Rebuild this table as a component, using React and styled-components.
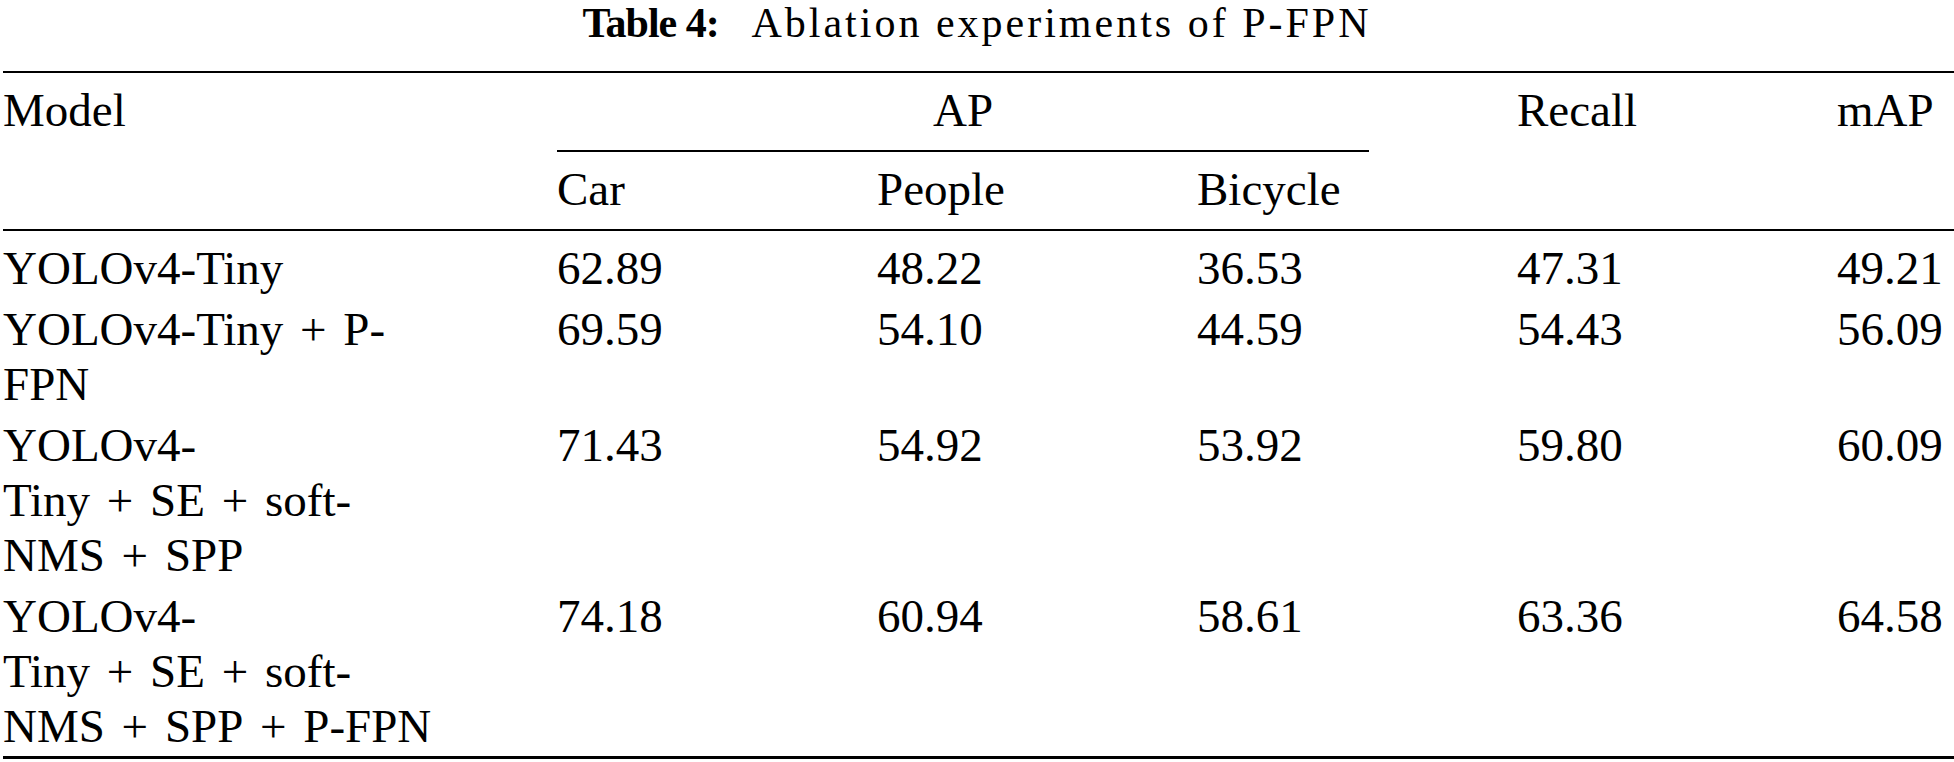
import React from "react";
import styled, { createGlobalStyle } from "styled-components";

const serif = `"Liberation Serif", Tinos, "Times New Roman", serif`;

const GlobalStyle = createGlobalStyle`
  html, body {
    margin: 0;
    padding: 0;
    background: #fff;
  }
  body {
    font-family: ${serif};
    color: #000;
  }
`;

const Page = styled.div`
  width: 1954px;
  overflow: hidden;
`;

const Caption = styled.div`
  font-family: ${serif};
  font-size: 42px;
  line-height: 46px;
  letter-spacing: 3px;
  text-align: center;
  margin-bottom: 25px;
  white-space: pre;
`;

const Label = styled.span`
  font-weight: bold;
  letter-spacing: -1px;
  margin-right: 8px;
`;

const Table = styled.table`
  font-family: ${serif};
  border-collapse: collapse;
  table-layout: fixed;
  width: 1951px;
  margin-left: 3px;
  font-size: 47px;
  line-height: 55px;
  color: #000;
  border-top: 2px solid #000;
  border-bottom: 3px solid #000;
`;

const Head = styled.thead`
  border-bottom: 2px solid #000;
`;

const Th = styled.th`
  font-weight: normal;
  text-align: left;
  vertical-align: top;
  padding: ${(p) => (p.$sub ? "10px 0 12px" : "10px 0 0")};
  padding-right: ${(p) => (p.$first ? "110px" : "0")};
`;

const Span = styled.div`
  text-align: center;
  padding-bottom: 12px;
  margin-right: 148px;
  border-bottom: 2px solid #000;
`;

const Row = styled.tr`
  & > td {
    padding-top: ${(p) => (p.$first ? "10px" : "3px")};
    padding-bottom: ${(p) => (p.$last ? "2px" : "3px")};
  }
`;

const Td = styled.td`
  vertical-align: top;
  text-align: left;
  padding-left: 0;
  padding-right: ${(p) => (p.$first ? "110px" : "0")};
  word-spacing: ${(p) => (p.$first ? "5px" : "normal")};
`;

// non-breaking spaces keep "a + b" together; only hyphens may break
const join = (parts) => parts.join("\u00a0+\u00a0");

const rows = [
  [["YOLOv4-Tiny"], "62.89", "48.22", "36.53", "47.31", "49.21"],
  [["YOLOv4-Tiny", "P-FPN"], "69.59", "54.10", "44.59", "54.43", "56.09"],
  [["YOLOv4-Tiny", "SE", "soft-NMS", "SPP"], "71.43", "54.92", "53.92", "59.80", "60.09"],
  [["YOLOv4-Tiny", "SE", "soft-NMS", "SPP", "P-FPN"], "74.18", "60.94", "58.61", "63.36", "64.58"],
];

export default function App() {
  return (
    <Page>
      <GlobalStyle />
      <Caption>
        <Label>Table 4:</Label>{"  "}Ablation experiments of P-FPN
      </Caption>
      <Table>
        <colgroup>
          <col style={{ width: 554 }} />
          <col style={{ width: 320 }} />
          <col style={{ width: 320 }} />
          <col style={{ width: 320 }} />
          <col style={{ width: 320 }} />
          <col style={{ width: 117 }} />
        </colgroup>
        <Head>
          <tr>
            <Th rowSpan={2} $first>Model</Th>
            <Th colSpan={3}>
              <Span>AP</Span>
            </Th>
            <Th rowSpan={2}>Recall</Th>
            <Th rowSpan={2}>mAP</Th>
          </tr>
          <tr>
            <Th $sub>Car</Th>
            <Th $sub>People</Th>
            <Th $sub>Bicycle</Th>
          </tr>
        </Head>
        <tbody>
          {rows.map(([model, ...vals], i) => (
            <Row key={i} $first={i === 0} $last={i === rows.length - 1}>
              <Td $first>{join(model)}</Td>
              {vals.map((v, j) => (
                <Td key={j}>{v}</Td>
              ))}
            </Row>
          ))}
        </tbody>
      </Table>
    </Page>
  );
}
